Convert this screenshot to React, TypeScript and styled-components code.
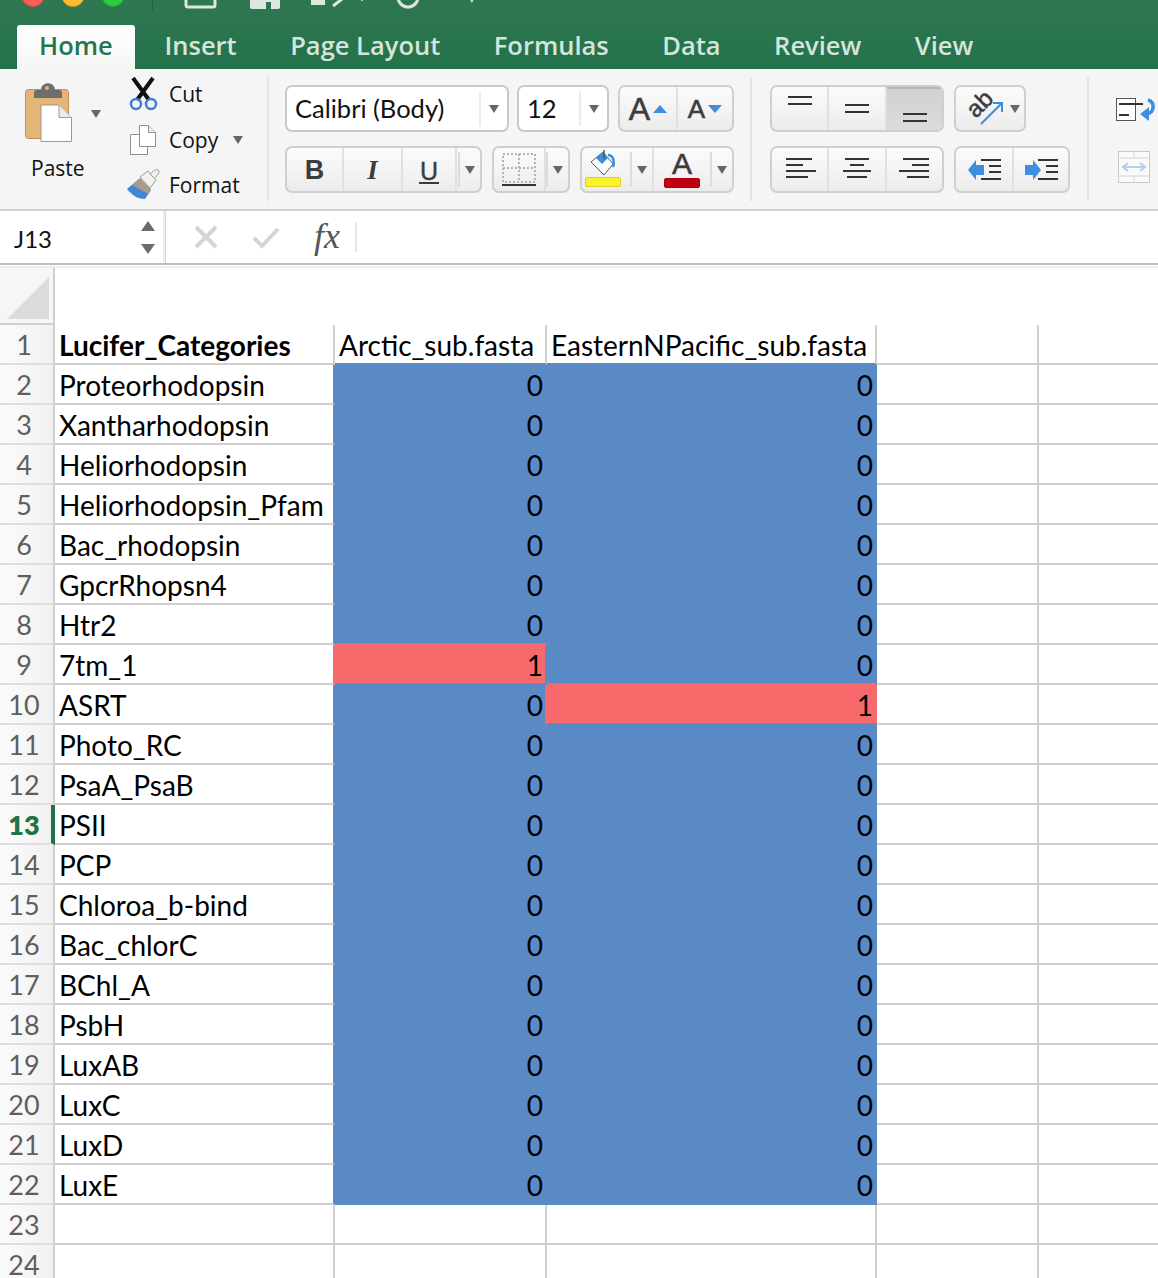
import React from "react";
import styled, { createGlobalStyle } from "styled-components";

const BLUE = "#5a8ac6";
const RED = "#f8696b";
const LINE = "#cfcfcf";
const UI_FONT = `"Open Sans", "Noto Sans", sans-serif`;
const SHEET_FONT = `Lato, "Open Sans", sans-serif`;

const Global = createGlobalStyle`
  html, body { margin: 0; padding: 0; background: #fff; overflow: hidden; }
  * { box-sizing: border-box; }
`;

const Page = styled.div`
  width: 1158px;
  height: 1278px;
  overflow: hidden;
  background: #fff;
`;

const Header = styled.header`
  height: 69px;
  background: linear-gradient(#2f7751, #23724a);
  display: flex;
  flex-direction: column;
`;

const TitleStrip = styled.div`
  height: 11px;
  overflow: hidden;
  display: flex;
  align-items: flex-end;
  padding-left: 21px;
`;

const Light = styled.span<{ $c: string; $b: string }>`
  width: 24px;
  height: 24px;
  flex: none;
  border-radius: 50%;
  margin-right: 16px;
  margin-bottom: 4px;
  background: ${(p) => p.$c};
  border: 1px solid ${(p) => p.$b};
`;

const TitleDivider = styled.span`
  width: 1px;
  height: 11px;
  background: #245f42;
  margin-left: 11px;
`;

const QuickIcons = styled.svg`
  width: 340px;
  height: 9px;
  flex: none;
  margin-bottom: 2px;
`;

const Tabs = styled.nav`
  margin-top: 14px;
  height: 44px;
  padding-left: 17px;
  display: flex;
`;

const Tab = styled.div<{ $active?: boolean }>`
  height: 44px;
  padding: 0 ${(p) => (p.$active ? "22px" : "26.75px")};
  margin-right: ${(p) => (p.$active ? "3px" : "0")};
  font: 600 25.5px/40px ${UI_FONT};
  white-space: nowrap;
  color: ${(p) => (p.$active ? "#23774d" : "#d5e5db")};
  background: ${(p) => (p.$active ? "linear-gradient(#ffffff, #f5f5f5)" : "transparent")};
  border-radius: ${(p) => (p.$active ? "3px 3px 0 0" : "0")};
`;

const Ribbon = styled.section`
  height: 142px;
  background: #f5f5f5;
  border-bottom: 2px solid #d0d0d0;
  padding-top: 8px;
  display: flex;
`;

const Section = styled.div<{ $w: number; $pl: number }>`
  width: ${(p) => p.$w}px;
  height: 124px;
  padding-left: ${(p) => p.$pl}px;
  border-right: 2px solid #e4e4e4;
  flex: none;
`;

const ClipSection = styled(Section)`
  display: flex;
`;

const PasteCol = styled.div`
  width: 66px;
  flex: none;
  padding-top: 6px;
  display: flex;
  flex-direction: column;
`;

const PasteLabel = styled.span`
  margin: 12px 0 0 6px;
  font: 400 21px/26px ${UI_FONT};
  color: #111;
`;

const PasteArrow = styled.div`
  padding-top: 33px;
  width: 36px;
  flex: none;
`;

const SmallCol = styled.div`
  display: flex;
  flex-direction: column;
  gap: 11.5px;
`;

const SmallRow = styled.div`
  height: 34px;
  display: flex;
  align-items: center;
`;

const SmallIcon = styled.svg`
  width: 42px;
  height: 34px;
  flex: none;
  overflow: visible;
`;

const SmallText = styled.span`
  font: 400 21px/34px ${UI_FONT};
  color: #111;
`;

const Caret = styled.i<{ $ml?: number }>`
  display: block;
  flex: none;
  width: 0;
  height: 0;
  margin-left: ${(p) => p.$ml ?? 0}px;
  border-left: 5px solid transparent;
  border-right: 5px solid transparent;
  border-top: 8px solid #666;
`;

const Stack = styled.div`
  padding-top: 8px;
  display: flex;
  flex-direction: column;
  gap: 14px;
`;

const ControlRow = styled.div`
  display: flex;
  height: 47px;
`;

const Select = styled.div<{ $w: number; $mr: number }>`
  width: ${(p) => p.$w}px;
  margin-right: ${(p) => p.$mr}px;
  height: 47px;
  flex: none;
  background: #fff;
  border: 2px solid #c9c9c9;
  border-radius: 7px;
  display: flex;
  align-items: center;
`;

const SelectText = styled.span`
  flex: 1;
  padding-left: 8px;
  font: 400 25.5px/1 ${SHEET_FONT};
  color: #111;
  white-space: nowrap;
`;

const SelectArrow = styled.span`
  width: 28px;
  height: 35px;
  flex: none;
  border-left: 2px solid #ececec;
  display: flex;
  align-items: center;
  justify-content: center;
`;

const Group = styled.div<{ $mr?: number }>`
  display: flex;
  height: 47px;
  flex: none;
  margin-right: ${(p) => p.$mr ?? 0}px;
  border: 2px solid #cfcfcf;
  border-radius: 7px;
  background: linear-gradient(#fbfbfb, #ececec);
  overflow: hidden;
`;

const Segment = styled.div<{ $w: number; $on?: boolean; $last?: boolean }>`
  width: ${(p) => p.$w}px;
  flex: none;
  display: flex;
  align-items: center;
  justify-content: center;
  border-right: ${(p) => (p.$last ? "none" : "2px solid #e0e0e0")};
  background: ${(p) => (p.$on ? "linear-gradient(#d0d0d0, #dcdcdc)" : "transparent")};
  box-shadow: ${(p) => (p.$on ? "inset 0 2px 1px #b4b4b4" : "none")};
`;

const ArrowSlot = styled.span`
  width: 22px;
  height: 35px;
  flex: none;
  border-left: 2px solid #dcdcdc;
  display: flex;
  align-items: center;
  justify-content: center;
`;

const StyleGlyph = styled.span<{ $kind: "b" | "i" | "u" }>`
  font-family: ${(p) => (p.$kind === "i" ? `"Liberation Serif", serif` : `"Liberation Sans", sans-serif`)};
  font-size: ${(p) => (p.$kind === "u" ? 25 : 27)}px;
  font-weight: ${(p) => (p.$kind === "u" ? 400 : 700)};
  font-style: ${(p) => (p.$kind === "i" ? "italic" : "normal")};
  color: #3c3c3c;
  line-height: 30px;
  ${(p) => (p.$kind === "u" ? "border-bottom: 2px solid #3c3c3c; height: 28px; padding: 0 1px; -webkit-text-stroke: 0.4px #3c3c3c;" : "")}
`;

const BigA = styled.span<{ $size: number }>`
  font: 400 ${(p) => p.$size}px/1 "Liberation Sans", sans-serif;
  -webkit-text-stroke: 0.6px #3c3c3c;
  color: #3c3c3c;
  margin-right: 3px;
`;

const Triangle = styled.i<{ $up?: boolean }>`
  display: block;
  width: 0;
  height: 0;
  border-left: 7px solid transparent;
  border-right: 7px solid transparent;
  ${(p) => (p.$up ? "border-bottom: 8px solid #3d8ee0;" : "border-top: 8px solid #3d8ee0;")}
`;

const ColorButton = styled.div<{ $pr?: number }>`
  flex: 1;
  height: 100%;
  display: flex;
  flex-direction: column;
  align-items: center;
  padding: 1px ${(p) => p.$pr ?? 0}px 0 0;
`;

const ColorBar = styled.span<{ $c: string; $b: string }>`
  width: 36px;
  height: 10px;
  border-radius: 2px;
  background: ${(p) => p.$c};
  border: 1px solid ${(p) => p.$b};
  flex: none;
`;

const ColorA = styled.span`
  height: 29px;
  font: 400 30px/29px "Liberation Sans", sans-serif;
  -webkit-text-stroke: 0.6px #3c3c3c;
  color: #3c3c3c;
`;

const WrapCol = styled.div`
  padding: 20px 0 0 27px;
  display: flex;
  flex-direction: column;
  gap: 28px;
`;

const Svg = styled.svg`
  display: block;
  flex: none;
  overflow: visible;
`;

const RotateIcon = styled(Svg)`
  margin-left: 9px;
`;

const MergeIcon = styled(Svg)`
  margin-left: 2px;
`;

const CheckIcon = styled(Svg)`
  margin-left: 34px;
`;

const FormulaBar = styled.section`
  height: 54px;
  display: flex;
  background: #fff;
  border-bottom: 2px solid #bdbdbd;
`;

const NameBox = styled.div`
  width: 163px;
  flex: none;
  padding: 4px 8px 0 14px;
  display: flex;
  align-items: center;
  justify-content: space-between;
  font: 400 24px/1 ${SHEET_FONT};
  color: #111;
`;

const Stepper = styled.div`
  display: flex;
  flex-direction: column;
  gap: 13px;
  margin-top: -3px;
`;

const StepArrow = styled.i<{ $up?: boolean }>`
  display: block;
  width: 0;
  height: 0;
  border-left: 7px solid transparent;
  border-right: 7px solid transparent;
  ${(p) => (p.$up ? "border-bottom: 10px solid #6b6b6b;" : "border-top: 10px solid #6b6b6b;")}
`;

const FormulaTools = styled.div`
  flex: 1;
  display: flex;
  align-items: center;
  padding-left: 29px;
  border-left: 2px solid #f0f0f0;
  box-shadow: inset 1px 0 0 #d4d4d4;
`;

const Fx = styled.span`
  flex: none;
  width: 43px;
  height: 30px;
  margin-left: 34px;
  font: italic 400 36px/28px "Liberation Serif", serif;
  color: #555;
  border-right: 2px solid #e6e6e6;
  white-space: nowrap;
`;

const Sheet = styled.div`
  border-top: 2px solid #eeeeee;
  margin-top: 1px;
  display: grid;
  grid-template-columns: 55px 280px 212px 330px 162px 130px;
  grid-auto-rows: 40px;
  grid-template-rows: 57px;
`;

const Corner = styled.div`
  border-right: 2px solid ${LINE};
  border-bottom: 2px solid ${LINE};
  background: #f6f6f6;
  padding: 9px 0 0 7px;
`;

const HeaderBlank = styled.div`
  grid-column: 2 / -1;
  background: #fff;
`;

const RowHead = styled.div<{ $sel?: boolean }>`
  border-right: ${(p) => (p.$sel ? "4px solid #217346" : `2px solid ${LINE}`)};
  border-bottom: 2px solid #dedede;
  background: linear-gradient(90deg, #fbfbfb, #f1f1f1);
  font: ${(p) => (p.$sel ? 800 : 400)} 27px/38px ${SHEET_FONT};
  color: ${(p) => (p.$sel ? "#217346" : "#5f5f5f")};
  text-align: center;
  padding-right: ${(p) => (p.$sel ? 3 : 5)}px;
  padding-top: 1px;
`;

const Cell = styled.div<{
  $fill?: string;
  $right?: string;
  $bottom?: string;
  $num?: boolean;
  $bold?: boolean;
}>`
  background: ${(p) => p.$fill ?? "#fff"};
  border-right: 2px solid ${(p) => p.$right ?? LINE};
  border-bottom: 2px solid ${(p) => p.$bottom ?? LINE};
  font: ${(p) => (p.$bold ? 700 : 400)} 28px/38px ${SHEET_FONT};
  color: #000;
  white-space: nowrap;
  overflow: hidden;
  padding: 1px ${(p) => (p.$num ? "2px" : "0")} 0 ${(p) => (p.$num ? "0" : "4px")};
  text-align: ${(p) => (p.$num ? "right" : "left")};
`;

const names = [
  "Proteorhodopsin", "Xantharhodopsin", "Heliorhodopsin", "Heliorhodopsin_Pfam", "Bac_rhodopsin",
  "GpcrRhopsn4", "Htr2", "7tm_1", "ASRT", "Photo_RC", "PsaA_PsaB", "PSII", "PCP", "Chloroa_b-bind",
  "Bac_chlorC", "BChl_A", "PsbH", "LuxAB", "LuxC", "LuxD", "LuxE",
];

const valueB = (r: number) => (r === 9 ? 1 : 0);
const valueC = (r: number) => (r === 10 ? 1 : 0);
const fillOf = (v: number) => (v === 1 ? RED : BLUE);
const fillB = (r: number) => (r >= 2 && r <= 22 ? fillOf(valueB(r)) : undefined);
const fillC = (r: number) => (r >= 2 && r <= 22 ? fillOf(valueC(r)) : undefined);

const Bars = ({ ys, x1, x2 }: { ys: [number, number?, number?][]; x1?: number; x2?: number }) => (
  <>
    {ys.map(([y, a, b], i) => (
      <line key={i} x1={a ?? x1} x2={b ?? x2} y1={y} y2={y} stroke="#333" strokeWidth="2" />
    ))}
  </>
);

const VAlign = ({ y }: { y: number }) => (
  <Svg width="24" height="36" viewBox="0 0 24 36">
    <Bars ys={[[y], [y + 7]]} x1={0} x2={24} />
  </Svg>
);

const HAlign = ({ rows }: { rows: [number, number][] }) => (
  <Svg width="32" height="26" viewBox="0 0 32 26">
    {rows.map(([a, b], i) => (
      <line key={i} x1={a} x2={b} y1={2 + i * 6} y2={2 + i * 6} stroke="#333" strokeWidth="2" />
    ))}
  </Svg>
);

const Indent = ({ right }: { right?: boolean }) => (
  <Svg width="34" height="24" viewBox="0 0 34 24">
    <Bars ys={[[2, 14, 34], [8, 22, 34], [14, 22, 34], [21, 14, 34]]} />
    <path
      d={right ? "M1 7h8V2l8 10-8 10v-5H1z" : "M17 7H9V2L1 12l8 10v-5h8z"}
      fill="#3d8ee0"
    />
  </Svg>
);

export default function App() {
  const rows = Array.from({ length: 24 }, (_, i) => i + 1);
  return (
    <Page>
      <Global />
      <Header>
        <TitleStrip>
          <Light $c="#fc5f57" $b="#cf4a44" />
          <Light $c="#fdbb2e" $b="#cf9526" />
          <Light $c="#2ccb41" $b="#22a233" />
          <TitleDivider />
          <QuickIcons viewBox="0 0 340 9">
            <rect x="33" y="-12" width="29" height="19" rx="2" fill="none" stroke="#dbe8e0" strokeWidth="3" />
            <path d="M99 -12h26a2 2 0 0 1 2 2V7a2 2 0 0 1-2 2h-7V2h-5v7H99a2 2 0 0 1-2-2v-17z" fill="#dbe8e0" />
            <path d="M158 -6l14 6v5h-14z" fill="#dbe8e0" />
            <path d="M180 6l9-7" stroke="#dbe8e0" strokeWidth="3" fill="none" />
            <circle cx="255" cy="-3" r="10" fill="none" stroke="#dbe8e0" strokeWidth="3" />
            <circle cx="209" cy="0" r="1" fill="#dbe8e0" />
            <path d="M315 -4l4 7 3-7" fill="#dbe8e0" />
          </QuickIcons>
        </TitleStrip>
        <Tabs>
          <Tab $active>Home</Tab>
          {["Insert", "Page Layout", "Formulas", "Data", "Review", "View"].map((t) => (
            <Tab key={t}>{t}</Tab>
          ))}
        </Tabs>
      </Header>

      <Ribbon>
        <ClipSection $w={269} $pl={25}>
          <PasteCol>
            <Svg width="48" height="60" viewBox="25 83 48 60">
              <rect x="25.5" y="89.5" width="43" height="49" rx="3" fill="#e3b577" stroke="#c3914f" />
              <path d="M34 98v-5a3 3 0 0 1 3-3h4c0-9 14-9 14 0h4a3 3 0 0 1 3 3v5z" fill="#6d6d6d" />
              <circle cx="47" cy="88" r="2" fill="#e3b577" />
              <path d="M41 105h18l12.500 12.500V141.500H41z" fill="#fff" stroke="#9a9a9a" />
              <path d="M59 105v12.500h12.500" fill="#ececec" stroke="#9a9a9a" />
            </Svg>
            <PasteLabel>Paste</PasteLabel>
          </PasteCol>
          <PasteArrow>
            <Caret />
          </PasteArrow>
          <SmallCol>
            <SmallRow>
              <SmallIcon viewBox="127 77 42 34">
                <path d="M133 78l16 22M153 78l-16 22" stroke="#111" strokeWidth="4" fill="none" />
                <circle cx="136" cy="104" r="5" fill="none" stroke="#3a80d2" strokeWidth="2.500" />
                <circle cx="151" cy="104" r="5" fill="none" stroke="#3a80d2" strokeWidth="2.500" />
              </SmallIcon>
              <SmallText>Cut</SmallText>
            </SmallRow>
            <SmallRow>
              <SmallIcon viewBox="127 122 42 34">
                <path d="M130.500 133.500h17v20h-17z" fill="#fff" stroke="#8f8f8f" />
                <path d="M139.500 124.500h9l7 7v14h-16z" fill="#fff" stroke="#8f8f8f" />
                <path d="M148.500 124.500v7h7" fill="#eee" stroke="#8f8f8f" />
              </SmallIcon>
              <SmallText>Copy</SmallText>
              <Caret $ml={15} />
            </SmallRow>
            <SmallRow>
              <SmallIcon viewBox="127 168 42 34">
                <path d="M127 189l12-10 12 11-6 9c-8 0-13-4-18-10z" fill="#3f86d6" />
                <path d="M132 185l8-7 11 11-3 5z" fill="#a99a89" />
                <path d="M140 177l8-6 8 9-6 8z" fill="#f2f2f2" stroke="#9a9a9a" />
                <path d="M150 174l5-4a2.500 2.500 0 0 1 3.500 3.500l-4 5z" fill="#f2f2f2" stroke="#9a9a9a" />
              </SmallIcon>
              <SmallText>Format</SmallText>
            </SmallRow>
          </SmallCol>
        </ClipSection>

        <Section $w={483} $pl={16}>
          <Stack>
            <ControlRow>
              <Select $w={224} $mr={8}>
                <SelectText>Calibri (Body)</SelectText>
                <SelectArrow>
                  <Caret />
                </SelectArrow>
              </Select>
              <Select $w={92} $mr={9}>
                <SelectText>12</SelectText>
                <SelectArrow>
                  <Caret />
                </SelectArrow>
              </Select>
              <Group>
                <Segment $w={58}>
                  <BigA $size={32}>A</BigA>
                  <Triangle $up />
                </Segment>
                <Segment $w={54} $last>
                  <BigA $size={26}>A</BigA>
                  <Triangle />
                </Segment>
              </Group>
            </ControlRow>
            <ControlRow>
              <Group $mr={10}>
                <Segment $w={57}><StyleGlyph $kind="b">B</StyleGlyph></Segment>
                <Segment $w={59}><StyleGlyph $kind="i">I</StyleGlyph></Segment>
                <Segment $w={54}><StyleGlyph $kind="u">U</StyleGlyph></Segment>
                <Segment $w={23} $last><ArrowSlot><Caret /></ArrowSlot></Segment>
              </Group>
              <Group $mr={10}>
                <Segment $w={52}>
                  <Svg width="36" height="34" viewBox="0 0 36 34">
                    <path d="M2 1h32v28H2zM18 1v28M2 15h32" fill="none" stroke="#b4b4b4" strokeWidth="2" strokeDasharray="2 2" />
                    <line x1="1" x2="35" y1="32" y2="32" stroke="#333" strokeWidth="2" />
                  </Svg>
                </Segment>
                <Segment $w={22} $last><ArrowSlot><Caret /></ArrowSlot></Segment>
              </Group>
              <Group>
                <Segment $w={72}>
                  <ColorButton $pr={6}>
                    <Svg width="26" height="28" viewBox="0 0 26 28">
                      <path d="M1 13L13 3l10 12-9 11z" fill="#fff" stroke="#555" />
                      <path d="M6 9l7-6 5 6-6 6z" fill="#3d8ee0" />
                      <path d="M14 1v9" stroke="#555" strokeWidth="1.500" fill="none" />
                      <path d="M18 6c5 0 7 6 5 12" stroke="#3d8ee0" strokeWidth="2.500" fill="none" />
                    </Svg>
                    <ColorBar $c="#fbf22c" $b="#d9d02a" />
                  </ColorButton>
                  <ArrowSlot><Caret /></ArrowSlot>
                </Segment>
                <Segment $w={78} $last>
                  <ColorButton>
                    <ColorA>A</ColorA>
                    <ColorBar $c="#c00011" $b="#b00010" />
                  </ColorButton>
                  <ArrowSlot><Caret /></ArrowSlot>
                </Segment>
              </Group>
            </ControlRow>
          </Stack>
        </Section>

        <Section $w={337} $pl={18}>
          <Stack>
            <ControlRow>
              <Group $mr={10}>
                <Segment $w={57}><VAlign y={6} /></Segment>
                <Segment $w={58}><VAlign y={14} /></Segment>
                <Segment $w={55} $last $on><VAlign y={23} /></Segment>
              </Group>
              <Group>
                <Segment $w={68} $last>
                  <RotateIcon width="36" height="32" viewBox="0 0 36 32">
                    <text
                      x="0"
                      y="20"
                      fontFamily="Liberation Sans, sans-serif"
                      fontSize="24"
                      fill="#3c3c3c"
                      stroke="#3c3c3c"
                      strokeWidth="0.5"
                      transform="rotate(-45 10 16)"
                    >
                      ab
                    </text>
                    <path d="M11 31L31 11M23 10h9v9" stroke="#3d8ee0" strokeWidth="2" fill="none" />
                  </RotateIcon>
                  <Caret $ml={4} />
                </Segment>
              </Group>
            </ControlRow>
            <ControlRow>
              <Group $mr={10}>
                <Segment $w={57}><HAlign rows={[[2, 28], [2, 19], [2, 32], [2, 24]]} /></Segment>
                <Segment $w={58}><HAlign rows={[[4, 28], [9, 23], [2, 30], [6, 26]]} /></Segment>
                <Segment $w={55} $last><HAlign rows={[[4, 30], [13, 30], [0, 30], [8, 30]]} /></Segment>
              </Group>
              <Group>
                <Segment $w={58}><Indent /></Segment>
                <Segment $w={54} $last><Indent right /></Segment>
              </Group>
            </ControlRow>
          </Stack>
        </Section>

        <WrapCol>
          <Svg width="40" height="26" viewBox="0 0 40 26">
            <rect x="0.500" y="1.500" width="19" height="22" fill="#fff" stroke="#555" />
            <path d="M3 7h24M3 18h10" stroke="#333" strokeWidth="2" fill="none" />
            <path d="M32 3c7 2 7 12-1 14" stroke="#3d8ee0" strokeWidth="3.500" fill="none" />
            <path d="M33 10v14l-9-7z" fill="#3d8ee0" />
          </Svg>
          <MergeIcon width="32" height="32" viewBox="0 0 32 32">
            <rect x="0.500" y="0.500" width="31" height="31" fill="#fafafa" stroke="#c8c8c8" />
            <path d="M0 7h32M0 25h32M16 0v7M16 25v7" stroke="#d4d4d4" fill="none" />
            <path d="M6 16h20M10 12l-5 4 5 4M22 12l5 4-5 4" stroke="#b4cfee" strokeWidth="2" fill="none" />
          </MergeIcon>
        </WrapCol>
      </Ribbon>

      <FormulaBar>
        <NameBox>
          J13
          <Stepper>
            <StepArrow $up />
            <StepArrow />
          </Stepper>
        </NameBox>
        <FormulaTools>
          <Svg width="24" height="24" viewBox="0 0 24 24">
            <path d="M2 2l20 20M22 2L2 22" stroke="#d4d4d4" strokeWidth="4" fill="none" />
          </Svg>
          <CheckIcon width="28" height="24" viewBox="0 0 28 24">
            <path d="M2 13l8 8L26 4" stroke="#d4d4d4" strokeWidth="4" fill="none" />
          </CheckIcon>
          <Fx>fx</Fx>
        </FormulaTools>
      </FormulaBar>

      <Sheet>
        <Corner>
          <Svg width="42" height="42" viewBox="0 0 42 42">
            <path d="M42 0v42H0z" fill="#dcdcdc" />
          </Svg>
        </Corner>
        <HeaderBlank />
        {rows.map((r) => {
          const b = fillB(r);
          const c = fillC(r);
          const nextB = fillB(r + 1);
          const nextC = fillC(r + 1);
          const name = r === 1 ? "Lucifer_Categories" : names[r - 2] ?? "";
          return (
            <React.Fragment key={r}>
              <RowHead $sel={r === 13}>{r}</RowHead>
              <Cell $bold={r === 1} $right={b}>{name}</Cell>
              <Cell $fill={b} $right={c} $bottom={nextB ?? b} $num={r > 1}>
                {r === 1 ? "Arctic_sub.fasta" : r <= 22 ? valueB(r) : ""}
              </Cell>
              <Cell $fill={c} $right={c} $bottom={nextC ?? c} $num={r > 1}>
                {r === 1 ? "EasternNPacific_sub.fasta" : r <= 22 ? valueC(r) : ""}
              </Cell>
              <Cell />
              <Cell />
            </React.Fragment>
          );
        })}
      </Sheet>
    </Page>
  );
}
